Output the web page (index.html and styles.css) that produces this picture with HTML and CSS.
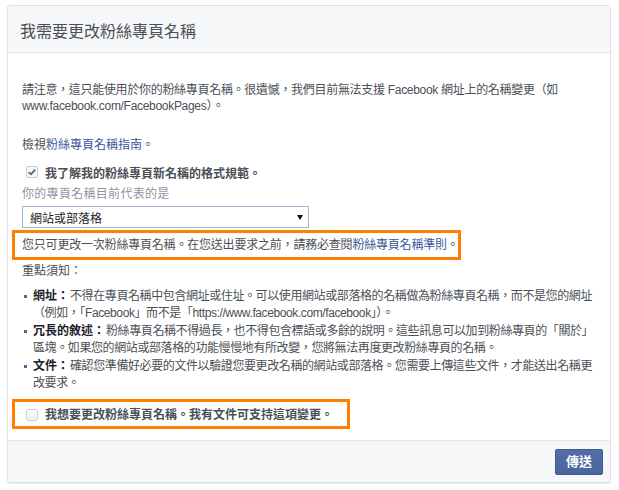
FILE: index.html
```html
<!DOCTYPE html>
<html lang="zh-Hant">
<head>
<meta charset="utf-8">
<title>我需要更改粉絲專頁名稱</title>
<link rel="stylesheet" href="styles.css">
</head>
<body>
<div class="page">
  <div class="dialog">
    <div class="dlg-header">
      <h2 class="dlg-title">我需要更改粉絲專頁名稱</h2>
    </div>
    <div class="dlg-body">
      <p class="note">請注意，這只能使用於你的粉絲專頁名稱。很遺憾，我們目前無法支援 Facebook 網址上的名稱變更（如 www.facebook.com/FacebookPages）。</p>
      <p class="guide">檢視<a href="#">粉絲專頁名稱指南</a>。</p>
      <div class="check-row">
        <span class="cbox checked"><svg width="10" height="10" viewBox="0 0 10 10"><polyline points="1.8,5.2 4,7.3 8.2,2.6" fill="none" stroke="#5a5e66" stroke-width="1.6"/></svg></span>
        <span class="check-text">我了解我的粉絲專頁新名稱的格式規範。</span>
      </div>
      <div class="field-label">你的專頁名稱目前代表的是</div>
      <div class="select">
        <span class="select-value">網站或部落格</span>
        <span class="select-arrow"></span>
      </div>
      <div class="highlight hl-1">您只可更改一次粉絲專頁名稱。在您送出要求之前，請務必查閱<a href="#">粉絲專頁名稱準則</a>。</div>
      <div class="notice-title">重點須知：</div>
      <ul class="rules">
        <li><span class="bullet"></span><span class="rule-text"><b>網址：</b>不得在專頁名稱中包含網址或住址。可以使用網站或部落格的名稱做為粉絲專頁名稱，而不是您的網址（例如，「Facebook」而不是「https://www.facebook.com/facebook」）。</span></li>
        <li><span class="bullet"></span><span class="rule-text"><b>冗長的敘述：</b>粉絲專頁名稱不得過長，也不得包含標語或多餘的說明。這些訊息可以加到粉絲專頁的「關於」區塊。如果您的網站或部落格的功能慢慢地有所改變，您將無法再度更改粉絲專頁的名稱。</span></li>
        <li><span class="bullet"></span><span class="rule-text"><b>文件：</b>確認您準備好必要的文件以驗證您要更改名稱的網站或部落格。您需要上傳這些文件，才能送出名稱更改要求。</span></li>
      </ul>
      <div class="highlight hl-2">
        <span class="cbox"></span>
        <span class="check-text">我想要更改粉絲專頁名稱。我有文件可支持這項變更。</span>
      </div>
    </div>
    <div class="dlg-footer">
      <button class="btn-confirm" type="button">傳送</button>
    </div>
  </div>
</div>
</body>
</html>
```

FILE: styles.css
```css
body {
  margin: 0;
  background: #ffffff;
  font-family: "Liberation Sans", "Noto Sans CJK TC", sans-serif;
  font-size: 12px;
  color: #4b4f56;
}

.page {
  padding: 5px 8px 6px 7px;
}

.dialog {
  width: 604px;
  box-sizing: border-box;
  border: 1px solid #dfe0e4;
  border-radius: 3px;
  background: #ffffff;
  box-shadow: 0 1px 1px rgba(0, 0, 0, 0.08);
}

.dlg-header {
  height: 47px;
  box-sizing: border-box;
  padding: 5px 12px 0;
  display: flex;
  align-items: center;
  background: #f6f7f9;
  border-bottom: 1px solid #e5e5e5;
  border-radius: 3px 3px 0 0;
}

.dlg-title {
  margin: 0;
  font-size: 16px;
  font-weight: normal;
  line-height: 20px;
  color: #4b4f56;
}

.dlg-body {
  padding: 29px 14px 11px;
}

a {
  color: #365899;
  text-decoration: none;
}

.note {
  margin: 0;
  line-height: 16px;
  letter-spacing: -0.3px;
}

.guide {
  margin: 23px 0 0;
  line-height: 16px;
}

.check-row {
  margin-top: 11px;
  height: 16px;
  display: flex;
  align-items: center;
}

.cbox {
  flex: none;
  width: 12px;
  height: 12px;
  box-sizing: border-box;
  margin-left: 4px;
  margin-right: 7px;
  border: 1px solid #ccd0d5;
  border-radius: 2px;
  background: linear-gradient(#fafbfb, #f1f2f4);
  display: flex;
  align-items: center;
  justify-content: center;
}

.cbox.checked {
  background: #f5f6f7;
}

.check-text {
  font-weight: bold;
  color: #4b4f56;
  white-space: nowrap;
}

.field-label {
  margin-top: 6px;
  line-height: 16px;
  color: #90949c;
  letter-spacing: 0.3px;
}

.select {
  margin-top: 4px;
  width: 287px;
  height: 22px;
  box-sizing: border-box;
  padding: 0 5px 0 7px;
  border: 1px solid #a7b6d6;
  background: #ffffff;
  display: flex;
  align-items: center;
  justify-content: space-between;
  color: #1d2129;
}

.select-arrow {
  width: 0;
  height: 0;
  border-left: 3px solid transparent;
  border-right: 3px solid transparent;
  border-top: 5px solid #111111;
}

.highlight {
  box-sizing: border-box;
  margin-left: -10px;
  border: 3px solid #ff8000;
  padding: 0 7px;
  height: 30px;
  line-height: 24px;
  white-space: nowrap;
}

.hl-1 {
  width: 449px;
  margin-top: 2px;
  letter-spacing: -0.2px;
}

.notice-title {
  margin-top: 3px;
  line-height: 16px;
}

.rules {
  list-style: none;
  margin: 9px 0 0;
  padding: 0 0 0 2px;
}

.rules li {
  display: flex;
  align-items: flex-start;
  line-height: 17.4px;
  letter-spacing: -0.4px;
}

.bullet {
  flex: none;
  width: 3px;
  height: 3px;
  margin-top: 7px;
  margin-right: 6px;
  background: #4b67a1;
}

.rule-text {
  flex: 1;
  min-width: 0;
}

.rules b {
  color: #1d2129;
  letter-spacing: 0;
  margin-right: 1px;
}

.hl-2 {
  width: 338px;
  margin-top: 7px;
  padding-top: 2px;
  display: flex;
  align-items: center;
}

.dlg-footer {
  border-top: 1px solid #e5e5e5;
  background: #f6f7f9;
  padding: 8px 7px 7px;
  display: flex;
  justify-content: flex-end;
  border-radius: 0 0 3px 3px;
}

.btn-confirm {
  height: 26px;
  padding: 0 10px;
  border: 1px solid #435a8b;
  border-radius: 2px;
  background: linear-gradient(#526ea8, #4a649c);
  color: #ffffff;
  font-family: "Liberation Sans", "Noto Sans CJK TC", sans-serif;
  font-size: 13px;
  font-weight: bold;
  line-height: 24px;
}
```
